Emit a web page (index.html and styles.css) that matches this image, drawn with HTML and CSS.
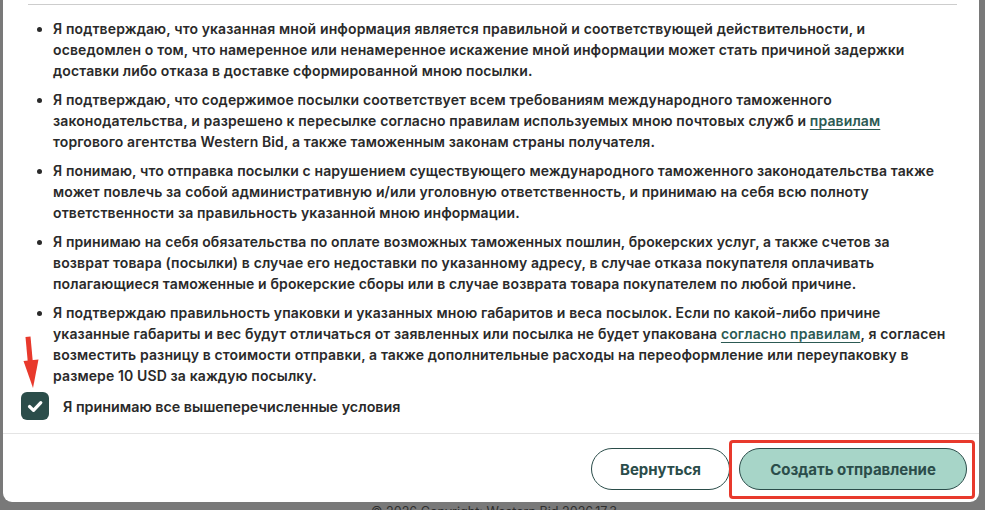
FILE: index.html
```html
<!DOCTYPE html>
<html lang="ru">
<head>
<meta charset="utf-8">
<title>Условия отправления</title>
<link rel="stylesheet" href="styles.css">
</head>
<body>
<div class="page">
  <div class="modal">
    <div class="top-rule"></div>
    <ul class="terms">
      <li>Я подтверждаю, что указанная мной информация является правильной и соответствующей действительности, и<br>осведомлен о том, что намеренное или ненамеренное искажение мной информации может стать причиной задержки доставки либо отказа в доставке сформированной мною посылки.</li>
      <li>Я подтверждаю, что содержимое посылки соответствует всем требованиям международного таможенного законодательства, и разрешено к пересылке согласно правилам используемых мною почтовых служб и <a href="#" class="link">правилам</a> торгового агентства Western Bid, а также таможенным законам страны получателя.</li>
      <li>Я понимаю, что отправка посылки с нарушением существующего международного таможенного законодательства также может повлечь за собой административную и/или уголовную ответственность, и принимаю на себя всю полноту ответственности за правильность указанной мною информации.</li>
      <li>Я принимаю на себя обязательства по оплате возможных таможенных пошлин, брокерских услуг, а также счетов за возврат товара (посылки) в случае его недоставки по указанному адресу, в случае отказа покупателя оплачивать полагающиеся таможенные и брокерские сборы или в случае возврата товара покупателем по любой причине.</li>
      <li>Я подтверждаю правильность упаковки и указанных мною габаритов и веса посылок. Если по какой-либо причине указанные габариты и вес будут отличаться от заявленных или посылка не будет упакована <a href="#" class="link">согласно правилам</a>, я согласен возместить разницу в стоимости отправки, а также дополнительные расходы на переоформление или переупаковку в размере 10 USD за каждую посылку.</li>
    </ul>
    <label class="accept">
      <span class="checkbox">
        <svg viewBox="0 0 28 28" width="28" height="28"><path d="M8.5 14.5 L12.5 18.3 L19.8 10.6" fill="none" stroke="#fff" stroke-width="3.2" stroke-linecap="round" stroke-linejoin="round"/></svg>
      </span>
      <span class="accept-text">Я принимаю все вышеперечисленные условия</span>
    </label>
    <div class="actions">
      <button class="btn btn-outline">Вернуться</button>
      <button class="btn btn-primary">Создать отправление</button>
    </div>
  </div>
  <div class="copyright">© 2026 Copyright: Western Bid 2026.17.3</div>

  <div class="highlight"></div>
  <svg class="arrow" viewBox="0 0 60 400" width="60" height="400">
    <polygon points="25.5,337 30.5,336.5 33,364 28,364.5" fill="#e8392c"/>
    <polygon points="23.5,361 38.5,359.5 33,388" fill="#e8392c"/>
  </svg>
</div>
</body>
</html>
```

FILE: styles.css
```css
html, body {
  margin: 0;
  padding: 0;
}
body {
  background: #797979;
  width: 985px;
  height: 510px;
  overflow: hidden;
  font-family: Inter, "Noto Sans", "Liberation Sans", sans-serif;
}
.page {
  position: relative;
  width: 985px;
  height: 510px;
  padding-left: 3px;
  box-sizing: border-box;
}
.modal {
  width: 976px;
  background: #ffffff;
  border-radius: 0 0 9px 9px;
  padding-top: 4px;
}
.top-rule {
  margin: 0 22px 0 25px;
  border-top: 1px solid #cdcdcd;
}
.terms {
  margin: 13px 0 0 0;
  padding: 0 32px 0 50px;
  color: #2a2a2a;
  font-size: 14px;
  font-weight: 600;
  letter-spacing: 0.12px;
  line-height: 21px;
}
.terms li {
  margin-bottom: 8px;
}
.terms li:last-child {
  margin-bottom: 0;
}
.link {
  color: #2c5a53;
  text-decoration: underline;
  text-underline-offset: 3px;
}
.accept {
  display: flex;
  align-items: center;
  gap: 14px;
  padding: 6px 18px 13px 18px;
  cursor: pointer;
}
.checkbox {
  width: 28px;
  height: 28px;
  border-radius: 6px;
  background: #2b4d4a;
  display: flex;
  flex: none;
}
.accept-text {
  color: #2a2a2a;
  font-size: 14.3px;
  font-weight: 600;
}
.actions {
  border-top: 1px solid #e4e4e4;
  display: flex;
  justify-content: flex-end;
  gap: 9px;
  padding: 14px 12px 12px 12px;
}
.btn {
  height: 42px;
  border-radius: 21px;
  border: 1px solid #2b4d4a;
  font-family: Inter, "Noto Sans", "Liberation Sans", sans-serif;
  font-size: 15px;
  font-weight: 700;
  color: #2b4d4a;
  padding: 0;
  cursor: pointer;
}
.btn-outline {
  width: 139px;
  background: #ffffff;
}
.btn-primary {
  width: 228px;
  background: #a7d5c8;
}
.copyright {
  text-align: center;
  color: #2e2e2e;
  font-size: 12.6px;
  line-height: 20px;
  margin-top: 0;
}
.highlight {
  position: absolute;
  left: 729px;
  top: 440px;
  width: 240px;
  height: 53px;
  border: 3px solid #e8392c;
  border-radius: 4px;
}
.arrow {
  position: absolute;
  left: 0;
  top: 0;
}
```
